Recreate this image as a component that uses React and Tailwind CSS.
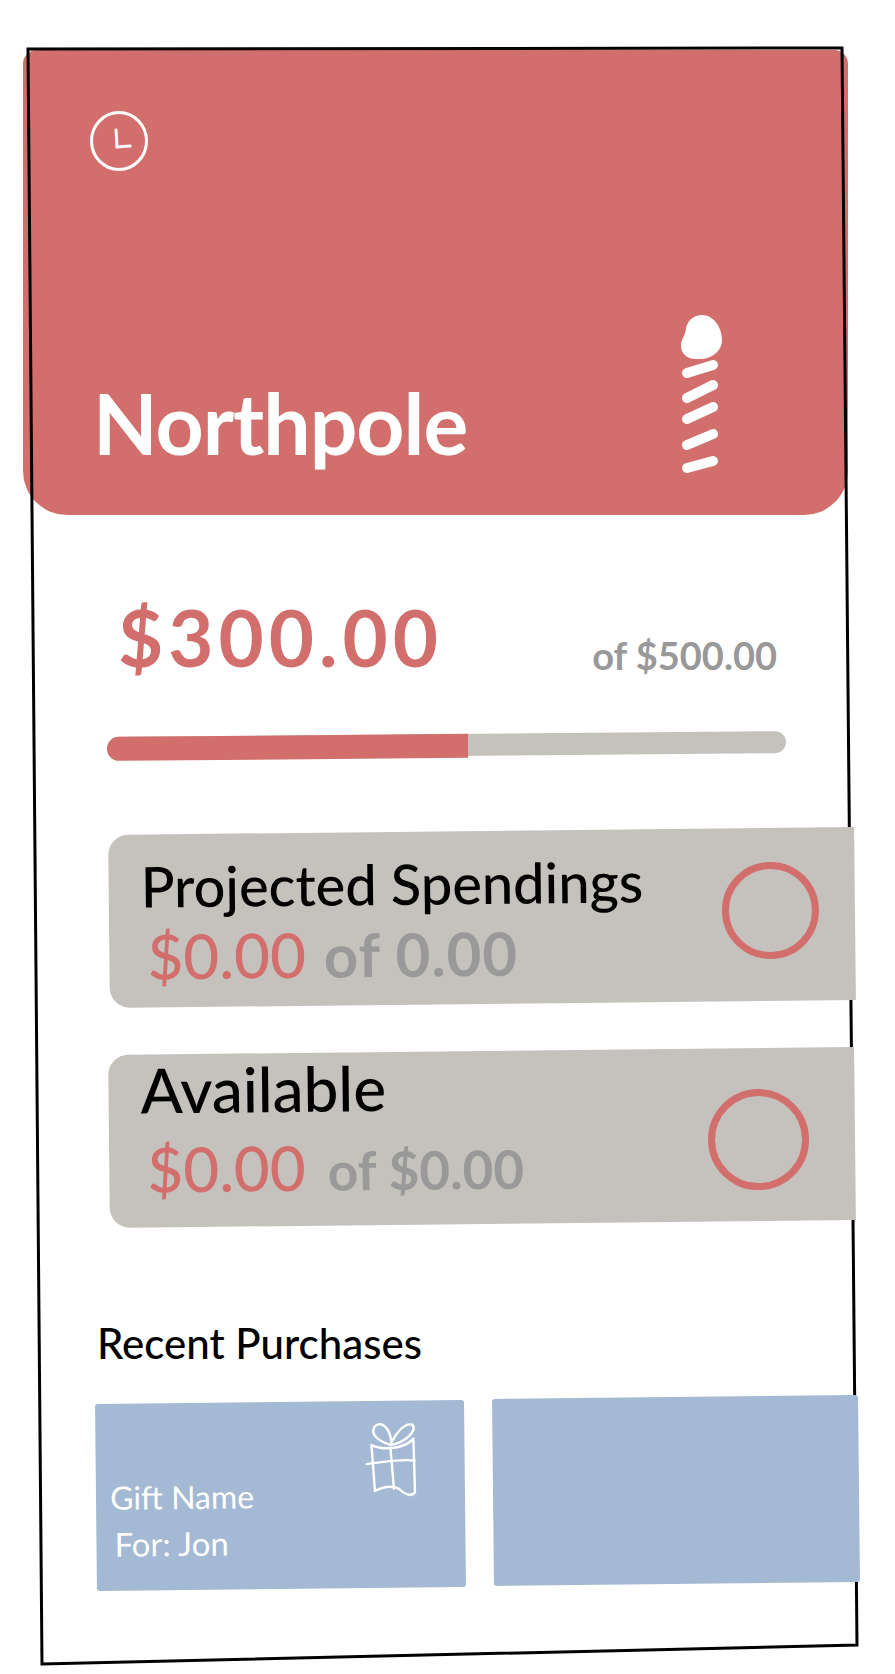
import React from "react";

const coral = "#d26f6c";

const ClockIcon = () => (
  <svg width="60" height="62" viewBox="0 0 60 62" fill="none" stroke="#fff" strokeLinecap="round">
    <ellipse cx="30" cy="31" rx="27.5" ry="28.5" strokeWidth="3" />
    <path d="M27 20 L28 37 L41 36" strokeWidth="3" />
  </svg>
);

const MenuMark = () => (
  <svg width="48" height="165" viewBox="0 0 48 165" fill="#fff" stroke="#fff" strokeLinecap="round">
    <path d="M24 1 C36 1 44 14 44 26 C44 38 32 46 20 45 C8 46 2 38 3 30 C4 24 8 20 8 14 C10 6 16 1 24 1 Z" stroke="none" />
    <g fill="none" strokeWidth="10">
      <path d="M9 59 L35 51" />
      <path d="M9 84 L35 71" />
      <path d="M9 105 L35 93" />
      <path d="M9 131 L35 120" />
      <path d="M9 154 L35 147" />
    </g>
  </svg>
);

const GiftIcon = () => (
  <svg width="62" height="78" viewBox="0 0 62 78" fill="none" stroke="#fff" strokeWidth="2.4" strokeLinecap="round" strokeLinejoin="round">
    <path d="M11 24 C24 30 44 28 53 18 L54 72 C50 76 44 74 38 68 C30 64 22 66 14 70 Z" />
    <path d="M6 43 C22 41 40 38 54 40" />
    <path d="M30 28 L33 68" />
    <path d="M30 24 C18 20 10 14 14 6 C20 -1 30 6 31 22 C36 12 44 2 52 4 C58 10 44 22 31 24" />
  </svg>
);

const GaugeCircle = ({ className }) => (
  <div className={`shrink-0 rounded-full border-[7px] border-[#d26f6c] ${className}`} />
);

const budgets = [
  {
    id: 1,
    title: "Projected Spendings",
    titleClass: "text-[56px] leading-[66px]",
    total: "of 0.00",
    totalClass: "text-[60px] tracking-[1px] ml-[18px]",
    ring: "h-[97px] w-[97px] mb-[8px] mr-[36px]",
    top: "mt-[75px]",
    amountClass: "mt-[4px]",
  },
  {
    id: 2,
    title: "Available",
    titleClass: "text-[62px] leading-[66px] mt-[-21px]",
    total: "of $0.00",
    totalClass: "text-[53px] ml-[22px]",
    ring: "h-[101px] w-[101px] mt-[10px] mr-[46px]",
    top: "mt-[47px]",
    amountClass: "mt-[14px]",
  },
];

export default function App() {
  return (
    <div className="relative h-[1674px] w-[895px] overflow-hidden bg-white pt-[50px] font-['Lato',sans-serif]">
      <header
        className="mx-[23px] flex h-[465px] w-[825px] flex-col justify-between rounded-t-[14px] rounded-b-[44px] pb-[36px] pl-[66px] pr-[122px] pt-[60px]"
        style={{ backgroundColor: coral }}
      >
        <ClockIcon />
        <div className="flex items-end justify-between">
          <h1 className="mb-[14px] ml-[4px] text-[84px] font-bold leading-none tracking-[-1px] text-white">Northpole</h1>
          <MenuMark />
        </div>
      </header>

      <div className="mt-[72px] flex items-end justify-between pl-[118px] pr-[118px]">
        <span className="text-[78px] font-bold leading-[100px] tracking-[5px] text-[#d26f6c]">$300.00</span>
        <span className="mb-[7px] text-[38px] font-bold leading-[50px] text-[#999]">of $500.00</span>
      </div>

      <div className="ml-[107px] mt-[47px] h-[22px] w-[679px] rotate-[-0.5deg] rounded-full bg-[#c5c2bd]">
        <div className="h-[24px] w-[361px] rounded-l-full rounded-r-[6px] bg-[#d26f6c]" />
      </div>

      {budgets.map((b) => (
        <section
          key={b.id}
          className={`${b.top} relative z-10 ml-[109px] flex h-[173px] w-[746px] rotate-[-0.6deg] items-center justify-between rounded-l-[20px] bg-[#c5c2bd] pl-[32px]`}
        >
          <div>
            <h2 className={`font-medium text-black ${b.titleClass}`}>{b.title}</h2>
            <p className={`ml-[6px] flex items-baseline leading-[64px] ${b.amountClass}`}>
              <span className="text-[62px] font-medium text-[#d26f6c]">$0.00</span>
              <span className={`font-bold text-[#999] ${b.totalClass}`}>{b.total}</span>
            </p>
          </div>
          <GaugeCircle className={b.ring} />
        </section>
      ))}

      <h3 className="ml-[97px] mt-[91px] text-[42px] font-medium leading-[56px] text-black">Recent Purchases</h3>

      <div className="ml-[96px] mt-[31px] flex items-start gap-[28px]">
        <article className="flex h-[187px] w-[369px] rotate-[-0.6deg] items-start justify-between rounded-[3px] bg-[#a4b9d3] pl-[14px] pr-[42px] pt-[20px]">
          <div className="mt-[50px] text-white">
            <p className="text-[32px] leading-[47px]">Gift Name</p>
            <p className="ml-[4px] text-[33px] leading-[46px]">For: Jon</p>
          </div>
          <GiftIcon />
        </article>
        <article className="relative z-10 mt-[-5px] h-[187px] w-[366px] rotate-[-0.6deg] rounded-[3px] bg-[#a4b9d3]" />
      </div>

      {/* the sketched phone outline: over the header, under the cards and tiles */}
      <svg className="pointer-events-none absolute inset-0" width="895" height="1674" fill="none" stroke="#000" strokeWidth="3">
        <path d="M28 49 L842 48 L857 1645 L42 1664 Z" />
      </svg>
    </div>
  );
}
